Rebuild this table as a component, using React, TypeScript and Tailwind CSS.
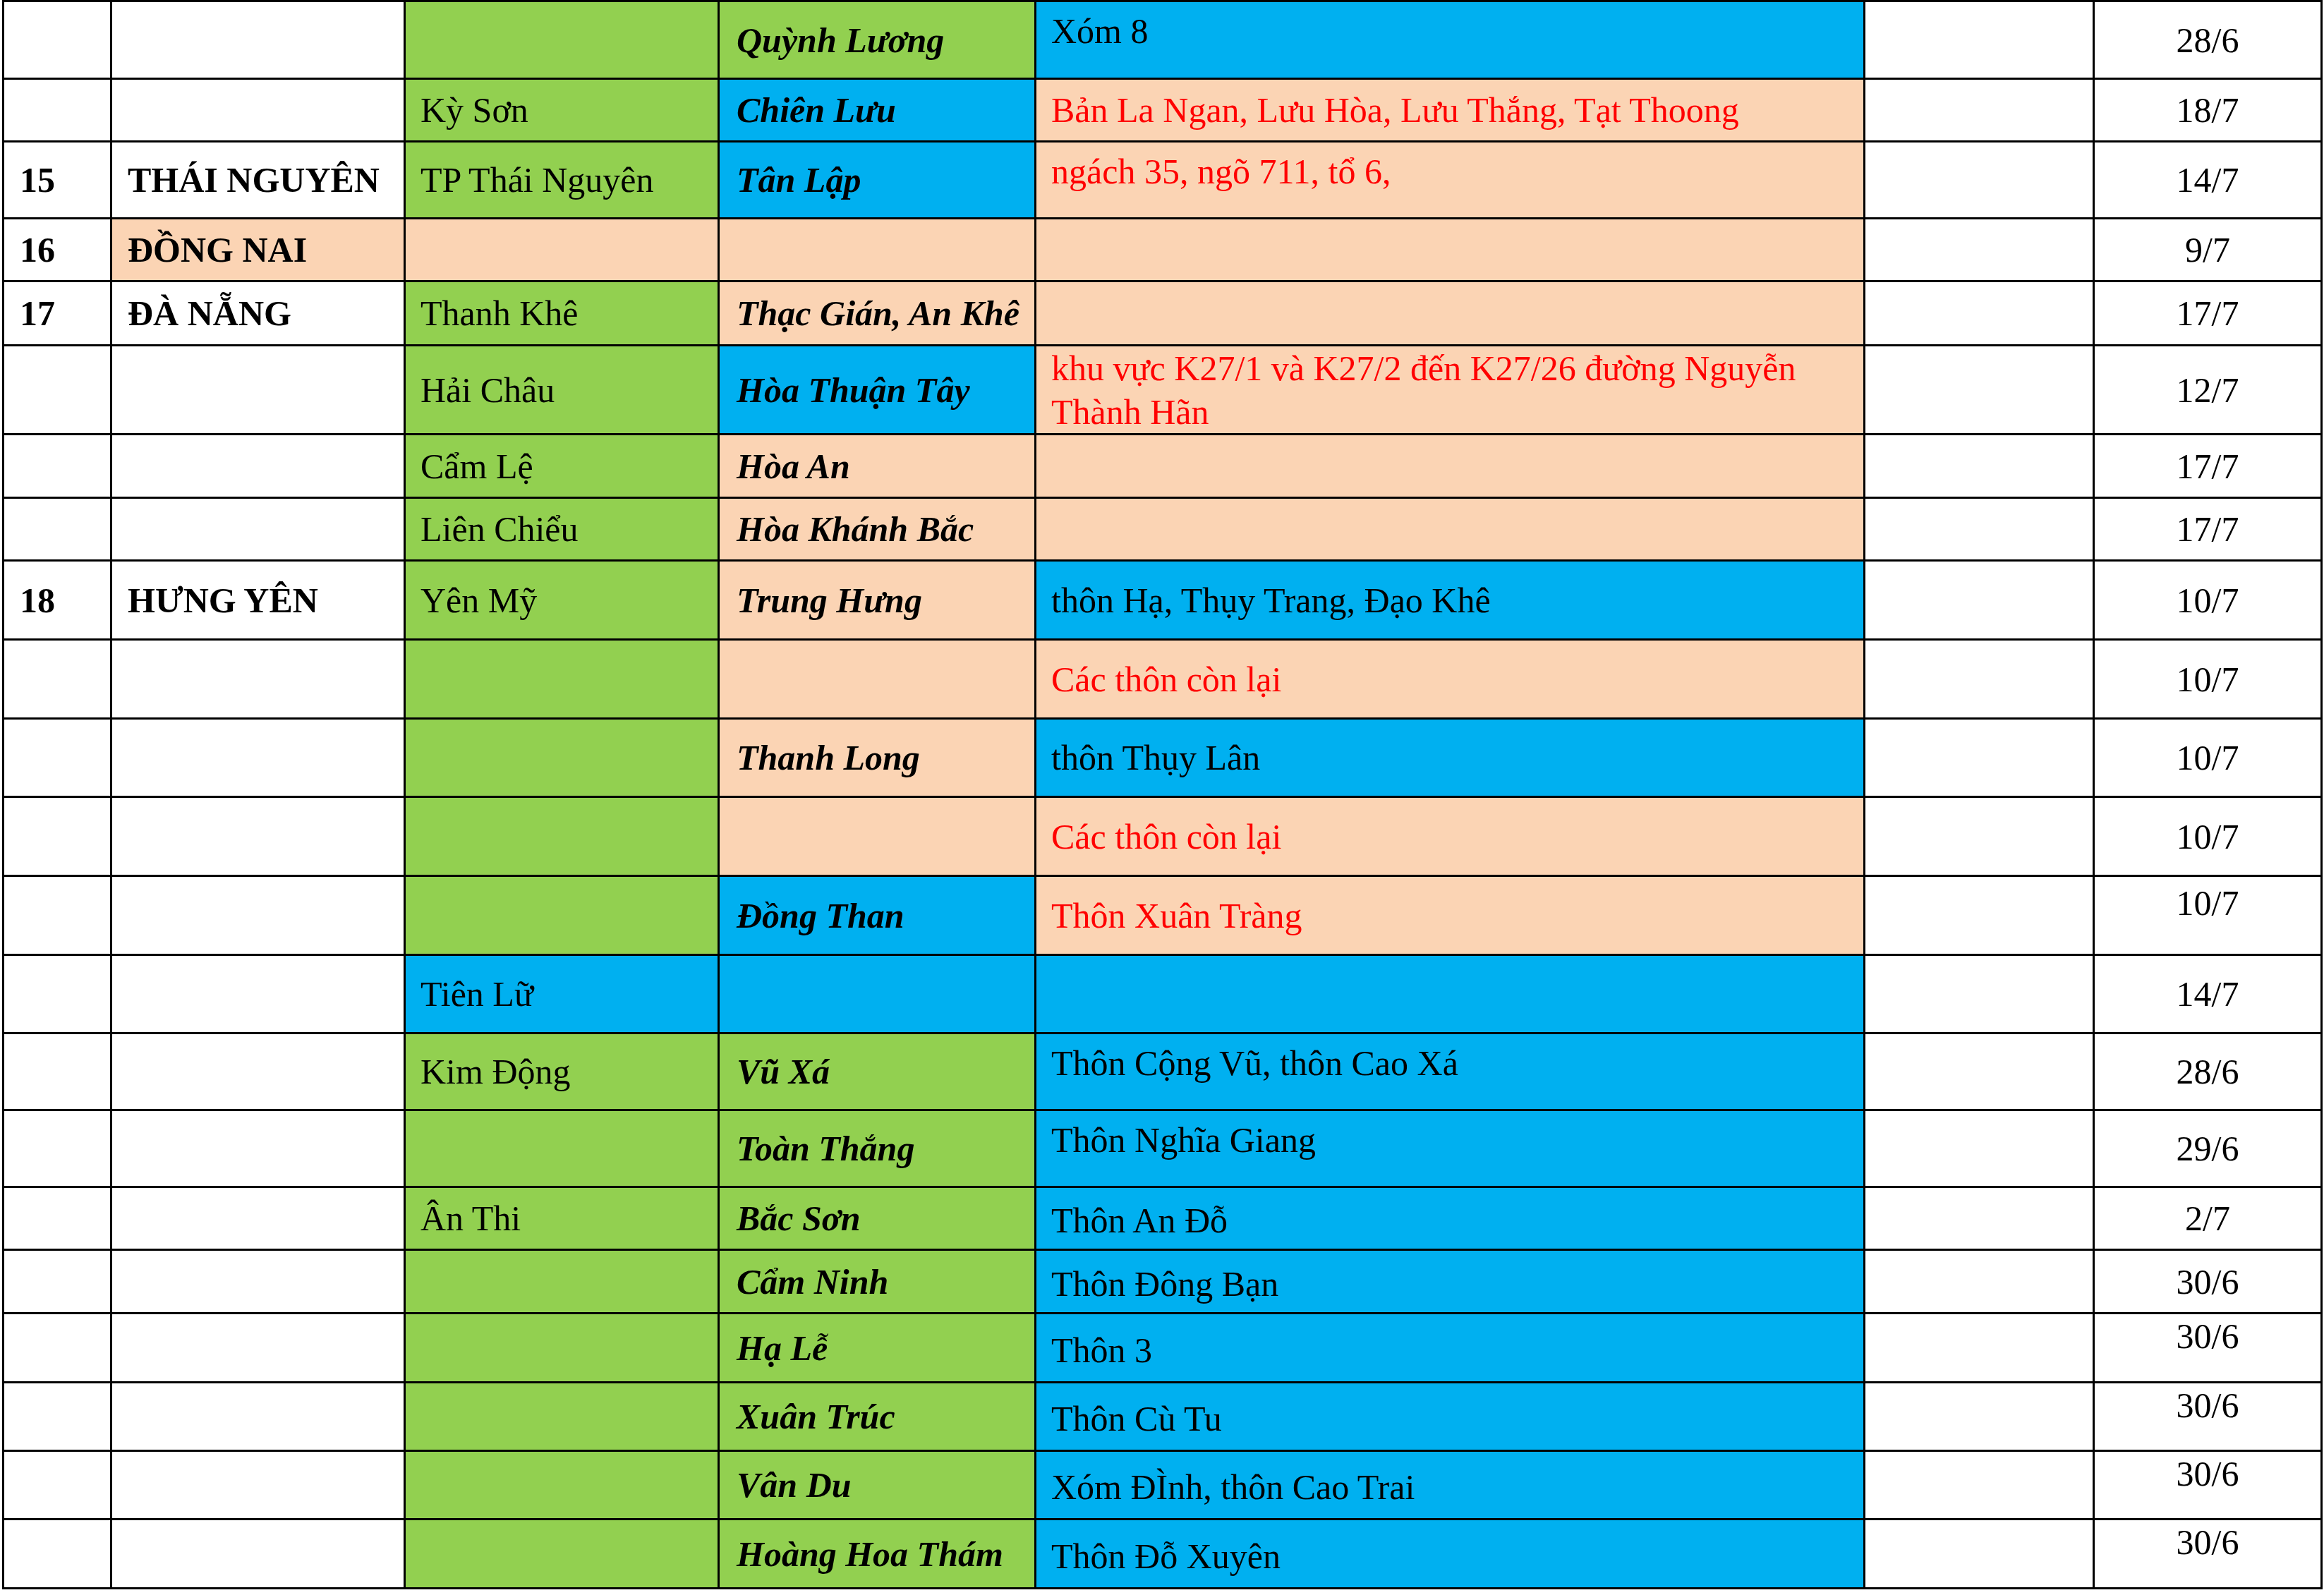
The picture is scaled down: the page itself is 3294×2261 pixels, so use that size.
import React from 'react';

const W = 'bg-white';
const G = 'bg-[#92D050]';
const B = 'bg-[#00B0F0]';
const P = 'bg-[#FBD4B4]';

// [text, background, vertical alignment, red text]
type Cell = [string, string, string?, boolean?];

const alignCls: Record<string, string> = {
  c: 'items-center',
  c6: 'items-center pt-[6px]',
  t: 'items-start',
  t6: 'items-start pt-[6px]',
  t10: 'items-start pt-[10px]',
};

const colCls = [
  'font-bold pl-[22px]',
  'font-bold pl-[22px]',
  'pl-[21px]',
  'font-bold italic pl-[24px]',
  'pl-[21px]',
  '',
  'justify-center',
];

const rows: Cell[][] = [
  [['', W], ['', W], ['', G], ['Quỳnh Lương', G], ['Xóm 8', B, 't10'], ['', W], ['28/6', W]],
  [['', W], ['', W], ['Kỳ Sơn', G], ['Chiên Lưu', B], ['Bản La Ngan, Lưu Hòa, Lưu Thắng, Tạt Thoong', P, 'c', true], ['', W], ['18/7', W]],
  [['15', W], ['THÁI NGUYÊN', W], ['TP Thái Nguyên', G], ['Tân Lập', B], ['ngách 35, ngõ 711, tổ 6,', P, 't10', true], ['', W], ['14/7', W]],
  [['16', W], ['ĐỒNG NAI', P], ['', P], ['', P], ['', P], ['', W], ['9/7', W]],
  [['17', W], ['ĐÀ NẴNG', W], ['Thanh Khê', G], ['Thạc Gián, An Khê', P], ['', P], ['', W], ['17/7', W]],
  [['', W], ['', W], ['Hải Châu', G], ['Hòa Thuận Tây', B], ['khu vực K27/1 và K27/2 đến K27/26 đường Nguyễn\nThành Hãn', P, 'c', true], ['', W], ['12/7', W]],
  [['', W], ['', W], ['Cẩm Lệ', G], ['Hòa An', P], ['', P], ['', W], ['17/7', W]],
  [['', W], ['', W], ['Liên Chiểu', G], ['Hòa Khánh Bắc', P], ['', P], ['', W], ['17/7', W]],
  [['18', W], ['HƯNG YÊN', W], ['Yên Mỹ', G], ['Trung Hưng', P], ['thôn Hạ, Thụy Trang, Đạo Khê', B], ['', W], ['10/7', W]],
  [['', W], ['', W], ['', G], ['', P], ['Các thôn còn lại', P, 'c', true], ['', W], ['10/7', W]],
  [['', W], ['', W], ['', G], ['Thanh Long', P], ['thôn Thụy Lân', B], ['', W], ['10/7', W]],
  [['', W], ['', W], ['', G], ['', P], ['Các thôn còn lại', P, 'c', true], ['', W], ['10/7', W]],
  [['', W], ['', W], ['', G], ['Đồng Than', B], ['Thôn Xuân Tràng', P, 'c', true], ['', W], ['10/7', W, 't6']],
  [['', W], ['', W], ['Tiên Lữ', B], ['', B], ['', B], ['', W], ['14/7', W]],
  [['', W], ['', W], ['Kim Động', G], ['Vũ Xá', G], ['Thôn Cộng Vũ, thôn Cao Xá', B, 't10'], ['', W], ['28/6', W]],
  [['', W], ['', W], ['', G], ['Toàn Thắng', G], ['Thôn Nghĩa Giang', B, 't10'], ['', W], ['29/6', W]],
  [['', W], ['', W], ['Ân Thi', G], ['Bắc Sơn', G], ['Thôn An Đỗ', B, 'c6'], ['', W], ['2/7', W]],
  [['', W], ['', W], ['', G], ['Cẩm Ninh', G], ['Thôn Đông Bạn', B, 'c6'], ['', W], ['30/6', W]],
  [['', W], ['', W], ['', G], ['Hạ Lễ', G], ['Thôn 3', B, 'c6'], ['', W], ['30/6', W, 't']],
  [['', W], ['', W], ['', G], ['Xuân Trúc', G], ['Thôn Cù Tu', B, 'c6'], ['', W], ['30/6', W, 't']],
  [['', W], ['', W], ['', G], ['Vân Du', G], ['Xóm ĐÌnh, thôn Cao Trai', B, 'c6'], ['', W], ['30/6', W, 't']],
  [['', W], ['', W], ['', G], ['Hoàng Hoa Thám', G], ['Thôn Đỗ Xuyên', B, 'c6'], ['', W], ['30/6', W, 't']],
];

const App: React.FC = () => {
  return (
    <div className="min-h-screen w-[3294px] bg-white">
      <div
        className="ml-[3px] grid w-[3289px] gap-[3px] bg-black p-[3px] text-[50px] leading-[62px] text-black grid-cols-[150px_413px_442px_446px_1172px_322px_320px] grid-rows-[107px_86px_106px_86px_88px_123px_87px_86px_109px_109px_108px_109px_109px_108px_106px_106px_86px_87px_95px_94px_94px_95px]"
        style={{ fontFamily: '"Liberation Serif", "Times New Roman", serif' }}
      >
        {rows.map((row, r) =>
          row.map(([text, bg, align, red], c) => (
            <div
              key={`${r}-${c}`}
              className={`flex whitespace-pre-line overflow-hidden ${bg} ${colCls[c]} ${alignCls[align ?? 'c']} ${red ? 'text-[#FF0000]' : ''}`}
            >
              {text}
            </div>
          ))
        )}
      </div>
    </div>
  );
};

export default App;
